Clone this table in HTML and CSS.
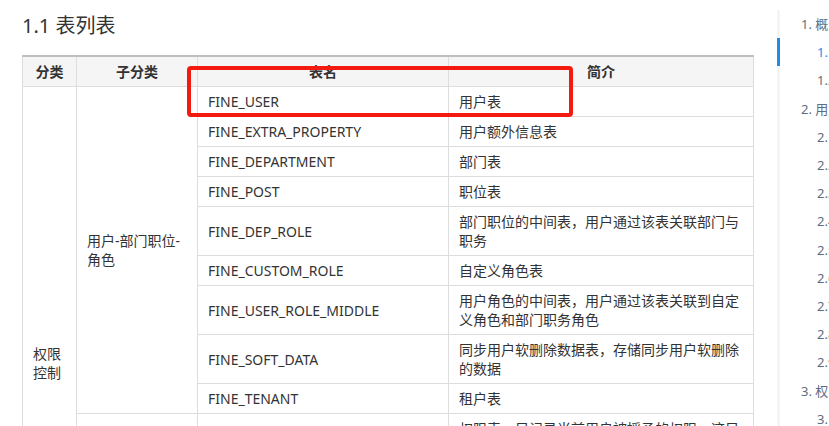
FILE: index.html
```html
<!DOCTYPE html>
<html lang="zh-CN">
<head>
<meta charset="utf-8">
<title>1.1 表列表</title>
<link rel="stylesheet" href="styles.css">
</head>
<body>
<div class="page">
  <main class="content">
    <h2 class="title">1.1 表列表</h2>
    <div class="table-wrap">
      <table class="tbl">
        <colgroup>
          <col class="c1"><col class="c2"><col class="c3"><col class="c4">
        </colgroup>
        <thead>
          <tr><th>分类</th><th>子分类</th><th>表名</th><th>简介</th></tr>
        </thead>
        <tbody>
          <tr>
            <td rowspan="14" class="mid">权限控制</td>
            <td rowspan="9" class="mid">用户-部门职位-角色</td>
            <td>FINE_USER</td><td>用户表</td>
          </tr>
          <tr><td>FINE_EXTRA_PROPERTY</td><td>用户额外信息表</td></tr>
          <tr><td>FINE_DEPARTMENT</td><td>部门表</td></tr>
          <tr><td>FINE_POST</td><td>职位表</td></tr>
          <tr><td>FINE_DEP_ROLE</td><td>部门职位的中间表，用户通过该表关联部门与职务</td></tr>
          <tr><td>FINE_CUSTOM_ROLE</td><td>自定义角色表</td></tr>
          <tr><td>FINE_USER_ROLE_MIDDLE</td><td>用户角色的中间表，用户通过该表关联到自定义角色和部门职务角色</td></tr>
          <tr><td>FINE_SOFT_DATA</td><td>同步用户软删除数据表，存储同步用户软删除的数据</td></tr>
          <tr><td>FINE_TENANT</td><td>租户表</td></tr>
          <tr>
            <td rowspan="5" class="mid">权限</td>
            <td>FINE_AUTHORITY</td><td>权限表，只记录当前用户被授予的权限，这只是一部分数据</td>
          </tr>
          <tr><td>FINE_AUTHORITY_OBJECT</td><td>权限实体表，记录所有需要进行权限控制的实体</td></tr>
          <tr><td>FINE_AUTH_PREFERENCE</td><td>权限偏好设置表，记录用户的权限配置偏好信息</td></tr>
          <tr><td>FINE_AUTH_EXTEND</td><td>权限扩展信息表，记录权限的扩展属性与附加数据</td></tr>
          <tr><td>FINE_AUTH_CACHE</td><td>权限缓存表</td></tr>
        </tbody>
      </table>
      <div class="mark"></div>
    </div>
  </main>
  <aside class="toc">
    <ul class="toc-list">
      <li class="l1">1. 概述</li>
      <li class="l2 active">1.1 表列表</li>
      <li class="l2">1.2 表结构</li>
      <li class="l1">2. 用户相关表</li>
      <li class="l2">2.1 FINE_USER</li>
      <li class="l2">2.2 FINE_EXTRA_PROPERTY</li>
      <li class="l2">2.3 FINE_DEPARTMENT</li>
      <li class="l2">2.4 FINE_POST</li>
      <li class="l2">2.5 FINE_DEP_ROLE</li>
      <li class="l2">2.6 FINE_CUSTOM_ROLE</li>
      <li class="l2">2.7 FINE_USER_ROLE_MIDDLE</li>
      <li class="l2">2.8 FINE_SOFT_DATA</li>
      <li class="l2">2.9 FINE_TENANT</li>
      <li class="l1">3. 权限相关表</li>
      <li class="l2">3.1 FINE_AUTHORITY</li>
    </ul>
  </aside>
</div>
</body>
</html>
```
FILE: styles.css
```css
html, body {
  margin: 0;
  padding: 0;
  background: #fff;
  overflow: hidden;
}
body {
  font-family: "Noto Sans", "Noto Sans CJK SC", sans-serif;
  color: #333;
}
.page {
  display: flex;
  width: 829px;
  height: 426px;
  overflow: hidden;
}
.content {
  flex: 0 0 auto;
  margin-left: 22px;
  width: 731px;
}
.title {
  margin: 12px 0 15px 0;
  font-size: 20px;
  line-height: 28px;
  font-weight: normal;
  color: #333;
}
.table-wrap {
  position: relative;
}
.tbl {
  border-collapse: collapse;
  table-layout: fixed;
  width: 731px;
  font-size: 14px;
  line-height: 19px;
}
.c1 { width: 54px; }
.c2 { width: 121px; }
.c3 { width: 251px; }
.c4 { width: 305px; }
.tbl th,
.tbl td {
  border: 1px solid #dddddd;
  padding: 5px 10px;
  text-align: left;
  vertical-align: middle;
}
.tbl th {
  background: #f5f5f5;
  font-weight: bold;
  text-align: center;
  border-top: 2px solid #bfbfbf;
}
.tbl td.mid {
  vertical-align: middle;
}
.mark {
  position: absolute;
  left: 165px;
  top: 11px;
  width: 378px;
  height: 43px;
  border: 4px solid #f31b10;
  border-radius: 4px;
}
.toc {
  flex: 0 0 auto;
  margin-left: 24px;
  margin-top: 10px;
  width: 160px;
  border-left: 3px solid #f5f5f5;
  position: relative;
}
.toc-list {
  list-style: none;
  margin: 0;
  padding: 0;
  font-size: 13px;
  line-height: 28.2px;
  color: #5e6d82;
  white-space: nowrap;
}
.toc-list li {
  margin: 0;
  position: relative;
}
.toc-list .l1 { padding-left: 21px; }
.toc-list .l2 { padding-left: 37px; }
.toc-list .active { color: #1f8ceb; }
.toc-list .active::before {
  content: "";
  position: absolute;
  left: -3px;
  top: 0;
  width: 3px;
  height: 28px;
  background: #1f8ceb;
}
```
